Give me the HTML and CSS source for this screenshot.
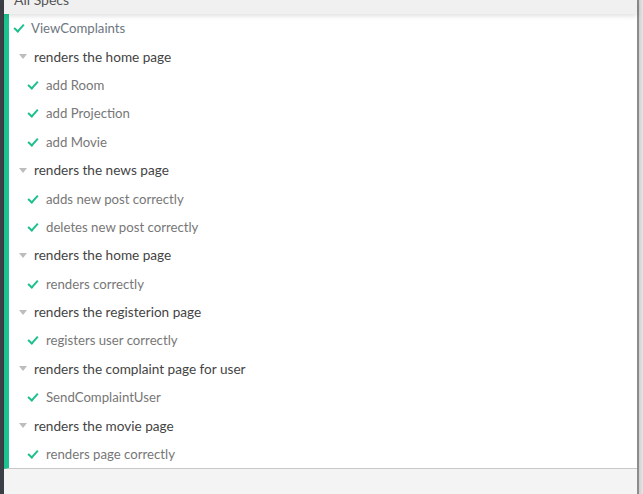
FILE: index.html
```html
<!DOCTYPE html>
<html>
<head>
<meta charset="utf-8">
<link rel="stylesheet" href="styles.css">
</head>
<body>
<div class="app">
  <div class="side"></div>
  <div class="main">
    <div class="header"><span class="header-title">All Specs</span></div>
    <div class="panel">
      <div class="row test lvl0"><span class="check"></span><span class="title root">ViewComplaints</span></div>
      <div class="row suite lvl0"><span class="caret"></span><span class="title">renders the home page</span></div>
      <div class="row test lvl1"><span class="check"></span><span class="title">add Room</span></div>
      <div class="row test lvl1"><span class="check"></span><span class="title">add Projection</span></div>
      <div class="row test lvl1"><span class="check"></span><span class="title">add Movie</span></div>
      <div class="row suite lvl0"><span class="caret"></span><span class="title">renders the news page</span></div>
      <div class="row test lvl1"><span class="check"></span><span class="title">adds new post correctly</span></div>
      <div class="row test lvl1"><span class="check"></span><span class="title">deletes new post correctly</span></div>
      <div class="row suite lvl0"><span class="caret"></span><span class="title">renders the home page</span></div>
      <div class="row test lvl1"><span class="check"></span><span class="title">renders correctly</span></div>
      <div class="row suite lvl0"><span class="caret"></span><span class="title">renders the registerion page</span></div>
      <div class="row test lvl1"><span class="check"></span><span class="title">registers user correctly</span></div>
      <div class="row suite lvl0"><span class="caret"></span><span class="title">renders the complaint page for user</span></div>
      <div class="row test lvl1"><span class="check"></span><span class="title">SendComplaintUser</span></div>
      <div class="row suite lvl0"><span class="caret"></span><span class="title">renders the movie page</span></div>
      <div class="row test lvl1"><span class="check"></span><span class="title">renders page correctly</span></div>
    </div>
    <div class="below"></div>
  </div>
  <div class="rborder"></div>
</div>
</body>
</html>
```
FILE: styles.css
```css
html, body {
  margin: 0;
  padding: 0;
  height: 100%;
}
body {
  font-family: Lato, "Open Sans", sans-serif;
  font-size: 14px;
  background: #f4f4f4;
}
.app {
  display: flex;
  height: 494px;
  overflow: hidden;
}
.side {
  width: 4px;
  background: #3b4046;
  flex: none;
}
.main {
  flex: 1;
  display: flex;
  flex-direction: column;
  min-width: 0;
}
.rborder {
  width: 6px;
  flex: none;
  background: linear-gradient(to right, #8c8c8c 0, #8c8c8c 2px, #cfcfcf 2px, #e6e6e6 6px);
}
.header {
  height: 14px;
  background: #f0f0f0;
  overflow: hidden;
  position: relative;
  z-index: 2;
  box-shadow: 0 2px 5px rgba(0, 0, 0, 0.13);
  flex: none;
}
.header-title {
  display: block;
  margin-top: -10px;
  padding-left: 10px;
  line-height: 20px;
  color: #555;
  font-size: 14px;
}
.panel {
  background: #fff;
  border-left: 5px solid #1cc28f;
  display: flex;
  flex-direction: column;
  box-shadow: 0 1px 2px rgba(0, 0, 0, 0.25);
  border-bottom: 1px solid #c9c9c9;
  flex: none;
}
.row {
  height: 28.4px;
  display: flex;
  align-items: center;
}
.row:first-child {
  margin-top: -1px;
  height: 29.4px;
}
.lvl0.test { padding-left: 6px; }
.lvl0.suite { padding-left: 10px; }
.lvl1 { padding-left: 20px; }
.check {
  width: 10px;
  height: 8px;
  margin-right: 7px;
  flex: none;
  position: relative;
}
.check::before {
  content: "";
  position: absolute;
  left: 1px;
  top: -2px;
  width: 4px;
  height: 8px;
  border-right: 2.2px solid #1cbf8d;
  border-bottom: 2.2px solid #1cbf8d;
  transform: rotate(42deg);
  transform-origin: center;
}
.lvl0 .check { margin-right: 6px; }
.caret {
  width: 0;
  height: 0;
  border-left: 4.5px solid transparent;
  border-right: 4.5px solid transparent;
  border-top: 5px solid #bdbdbd;
  margin-right: 7px;
  flex: none;
}
.title {
  color: #777;
  white-space: nowrap;
  font-size: 13.2px;
}
.suite .title {
  color: #444;
  font-size: 13.6px;
}
.title.root {
  color: #6d7681;
}
.below {
  flex: 1;
  background: #f4f4f4;
}
```
